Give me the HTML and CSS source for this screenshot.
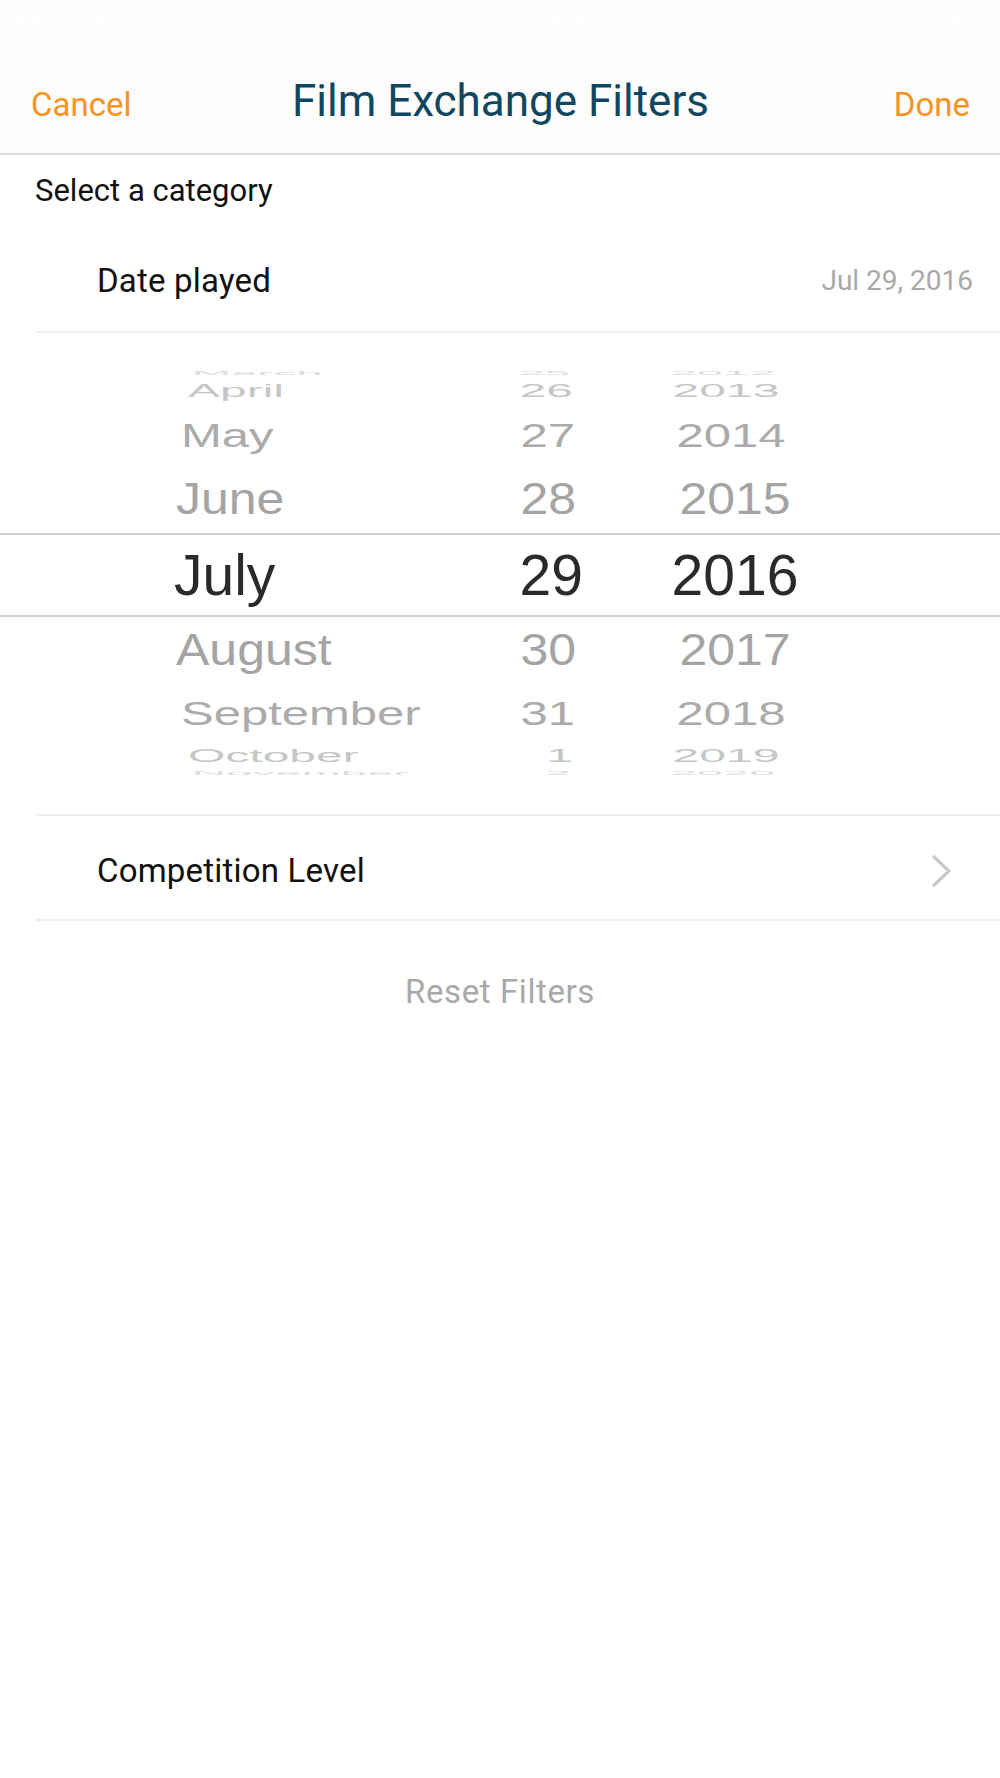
FILE: index.html
```html
<!DOCTYPE html>
<html lang="en">
<head>
    <meta charset="UTF-8">
    <meta name="viewport" content="width=device-width, initial-scale=1.0">
    <title>Film Exchange Filters</title>
    <link rel="stylesheet" href="styles.css">
</head>
<body>
    <div class="status">
        <span>&#9679;&#9679;&#9675;&#9675;&#9675; AT&amp;T</span>
        <span>2:09 AM</span>
        <span>100%</span>
    </div>
    <header class="nav">
        <a href="" class="nav-btn">Cancel</a>
        <h1>Film Exchange Filters</h1>
        <a href="" class="nav-btn done">Done</a>
    </header>

    <div class="section-label">Select a category</div>

    <div class="row date-row">
        <span class="row-title">Date played</span>
        <span class="row-value">Jul 29, 2016</span>
    </div>

    <!-- date wheel -->
    <div class="picker">
        <div class="wheel-row edge">
            <span class="month">March</span><span class="day">25</span><span class="year">2012</span>
        </div>
        <div class="wheel-row far">
            <span class="month">April</span><span class="day">26</span><span class="year">2013</span>
        </div>
        <div class="wheel-row mid top">
            <span class="month">May</span><span class="day">27</span><span class="year">2014</span>
        </div>
        <div class="wheel-row near top">
            <span class="month">June</span><span class="day">28</span><span class="year">2015</span>
        </div>
        <div class="wheel-row selected">
            <span class="month">July</span><span class="day">29</span><span class="year">2016</span>
        </div>
        <div class="wheel-row near bottom">
            <span class="month">August</span><span class="day">30</span><span class="year">2017</span>
        </div>
        <div class="wheel-row mid bottom">
            <span class="month">September</span><span class="day">31</span><span class="year">2018</span>
        </div>
        <div class="wheel-row far low">
            <span class="month">October</span><span class="day">1</span><span class="year">2019</span>
        </div>
        <div class="wheel-row edge">
            <span class="month">November</span><span class="day">2</span><span class="year">2020</span>
        </div>
    </div>

    <div class="row comp-row">
        <span class="row-title">Competition Level</span>
        <svg class="chevron" width="22" height="34" viewBox="0 0 22 34">
            <polyline points="3,2 19,17 3,32" fill="none" stroke="#c7c7cc" stroke-width="3.2"/>
        </svg>
    </div>

    <div class="reset">Reset Filters</div>
</body>
</html>
```

FILE: styles.css
```css
body {
  margin: 0;
  padding: 0;
  background: #ffffff;
  font-family: Roboto, "Open Sans", sans-serif;
  color: #111;
}

.status {
  height: 40px;
  display: flex;
  justify-content: space-between;
  align-items: center;
  padding: 0 12px;
  background: #fdfdfd;
  color: #ffffff;
  font-size: 24px;
  font-weight: bold;
}

.nav {
  display: grid;
  grid-template-columns: 1fr auto 1fr;
  align-items: baseline;
  height: 77px;
  padding: 36px 30px 0 31px;
  background: #fdfdfd;
  border-bottom: 2px solid #dcdcdc;
}
.nav h1 {
  margin: 0;
  font-size: 44px;
  line-height: 50px;
  font-weight: normal;
  color: #0f4761;
}
.nav-btn {
  justify-self: start;
  font-size: 33px;
  line-height: 50px;
  color: #f6941f;
  text-decoration: none;
}
.nav-btn.done {
  justify-self: end;
}

.section-label {
  padding: 18px 0 0 35px;
  font-size: 31px;
  line-height: 36px;
}

.row {
  display: flex;
  justify-content: space-between;
  align-items: center;
  margin-left: 36px;
  padding-left: 61px;
  line-height: 36px;
}
.row-title {
  font-size: 33px;
  letter-spacing: 0.2px;
}
.date-row {
  padding: 54px 27px 32px 61px;
  border-bottom: 2px solid #efefef;
}
.row-value {
  font-size: 28px;
  color: #a9a9a9;
}

.picker {
  margin-top: 36px;
  height: 408px;
  overflow: hidden;
  font-family: "Liberation Sans", Arial, sans-serif;
}
.wheel-row {
  display: grid;
  grid-template-columns: 239px 143px 250px;
  column-gap: 27px;
  padding-left: 174px;
  box-sizing: border-box;
  font-size: 50px;
  color: #a4a4a4;
  white-space: nowrap;
}
.wheel-row span {
  display: inline-block;
}
.wheel-row .month {
  transform-origin: left center;
}
.wheel-row .day {
  text-align: right;
  transform-origin: right center;
}
.wheel-row .year {
  text-align: center;
}

.wheel-row.selected {
  height: 84px;
  line-height: 80px;
  font-size: 57px;
  color: #2a2a2a;
  border-top: 2px solid #cfcfcf;
  border-bottom: 2px solid #cfcfcf;
}
.wheel-row.near {
  height: 68px;
  line-height: 68px;
}
.wheel-row.near.bottom {
  height: 66px;
  line-height: 66px;
}
.wheel-row.near .month {
  transform: translateX(2px) scaleY(0.9);
}
.wheel-row.near .day {
  transform: translateX(-7px) scaleY(0.9);
}
.wheel-row.near .year {
  transform: scaleY(0.9);
}
.wheel-row.mid {
  height: 60px;
  line-height: 60px;
  color: #ababab;
}
.wheel-row.mid .month {
  transform: translateX(7px) scale(0.98, 0.68);
}
.wheel-row.mid .day {
  transform: translateX(-8px) scale(0.98, 0.68);
}
.wheel-row.mid .year {
  transform: translateX(-4px) scale(0.98, 0.68);
}
.wheel-row.far {
  height: 28px;
  line-height: 28px;
  color: #c6c6c6;
}
.wheel-row.far.low {
  height: 26px;
  line-height: 26px;
}
.wheel-row.far .month {
  transform: translateX(14px) scale(0.96, 0.36);
}
.wheel-row.far .day {
  transform: translateX(-10px) scale(0.96, 0.36);
}
.wheel-row.far .year {
  transform: translateX(-9px) scale(0.96, 0.36);
}
.wheel-row.edge {
  height: 8px;
  line-height: 8px;
  color: #dcdcdc;
}
.wheel-row.edge .month {
  transform: translateX(18px) scale(0.94, 0.1);
}
.wheel-row.edge .day {
  transform: translateX(-12px) scale(0.94, 0.1);
}
.wheel-row.edge .year {
  transform: translateX(-12px) scale(0.94, 0.1);
}

.comp-row {
  margin-top: 37px;
  padding: 37px 48px 30px 61px;
  border-top: 2px solid #efefef;
  border-bottom: 2px solid #efefef;
}
.chevron {
  display: block;
}

.reset {
  margin-top: 53px;
  text-align: center;
  font-size: 33px;
  letter-spacing: 0.6px;
  line-height: 36px;
  color: #a9a9a9;
}
```
